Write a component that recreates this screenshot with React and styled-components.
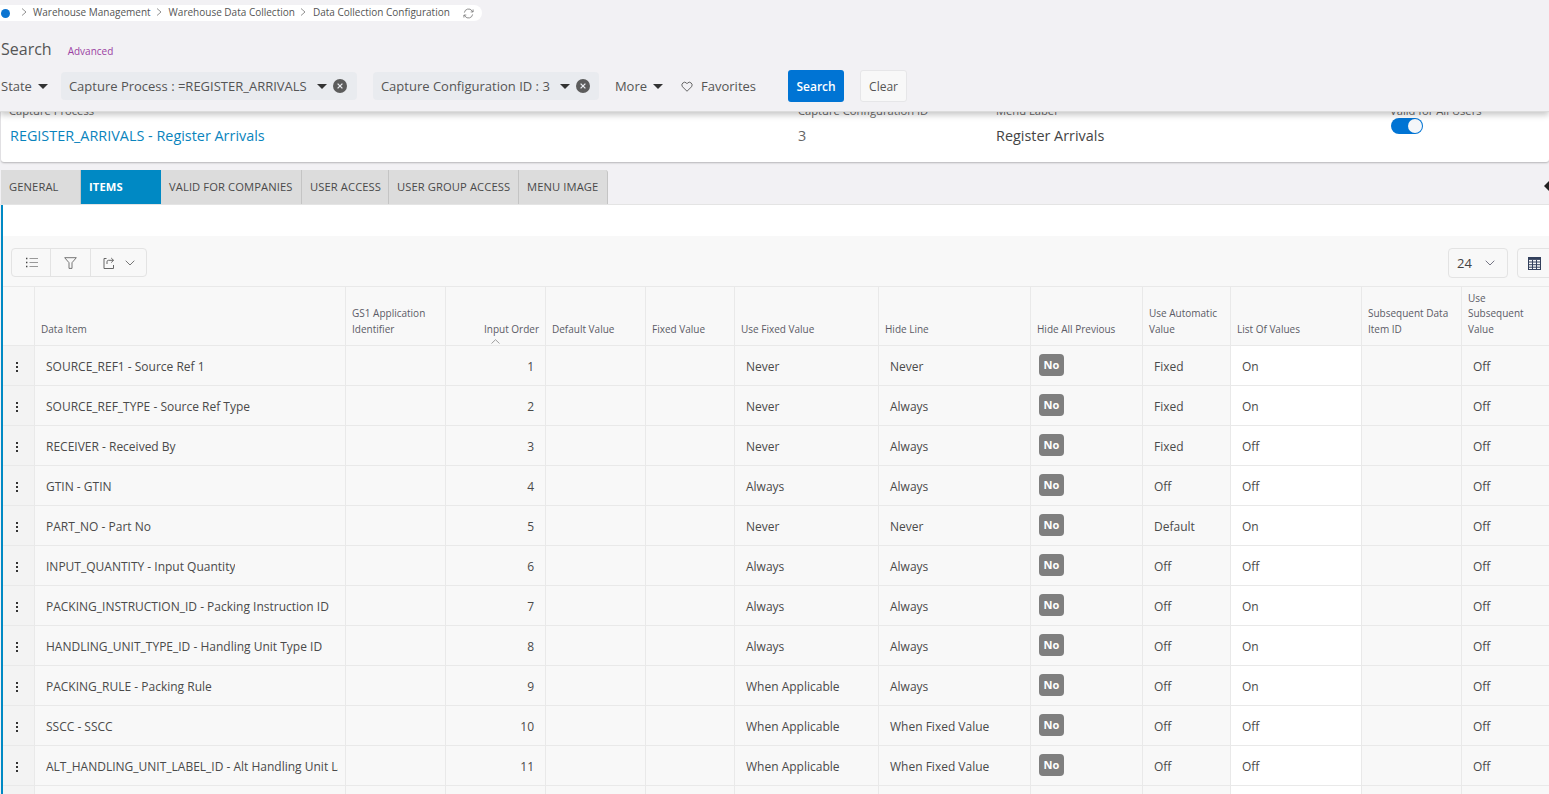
import React from "react";
import styled, { createGlobalStyle } from "styled-components";

const Global = createGlobalStyle`
  html, body { margin: 0; padding: 0; height: 794px; overflow: hidden; background: #f2f1f4; }
  * { box-sizing: border-box; }
  body { font-family: "Open Sans", "Liberation Sans", sans-serif; color: #444; }
`;

const Page = styled.div`
  width: 1549px;
  height: 794px;
  overflow: hidden;
  display: flex;
  flex-direction: column;
`;

const SearchHeader = styled.header`
  position: relative;
  z-index: 2;
  height: 112px;
  flex: none;
  background: #f2f1f4;
  border-bottom: 1px solid #dcdcdc;
  box-shadow: 0 3px 6px rgba(0, 0, 0, 0.22);
  padding-top: 5px;
`;

const Crumbs = styled.nav`
  width: 482px;
  height: 16px;
  padding-bottom: 2px;
  background: #fff;
  border-radius: 0 8px 8px 0;
  display: flex;
  align-items: center;
  font-size: 10px;
  color: #555;
  white-space: nowrap;
`;

const HomeDot = styled.span`
  width: 9px;
  height: 9px;
  border-radius: 50%;
  background: #0b74d1;
  margin: 2px 7px 0 1px;
`;

const CrumbSep = styled.svg`
  width: 6px;
  height: 8px;
  margin: 0 ${p => p.$gap}px 0 ${p => p.$left}px;
  flex: none;
`;

const Refresh = styled.svg`
  width: 11px;
  height: 11px;
  margin: 2px 0 0 13px;
`;

const TitleRow = styled.div`
  display: flex;
  align-items: baseline;
  margin-top: 17px;
  padding-left: 1px;
`;

const Title = styled.h1`
  margin: 0;
  font-size: 16px;
  line-height: 22px;
  font-weight: 400;
  color: #555;
`;

const AdvancedLink = styled.a`
  margin-left: 16px;
  font-size: 10px;
  color: #9b3fa3;
`;

const FilterRow = styled.div`
  display: flex;
  align-items: center;
  height: 32px;
  margin-top: 10px;
  padding-left: 1px;
  font-size: 13px;
  color: #555;
  white-space: nowrap;
`;

const FilterLabel = styled.span`
  display: inline-flex;
  align-items: center;
  margin-right: ${p => p.$mr || 0}px;
`;

const Caret = styled.span`
  display: inline-block;
  width: 0;
  height: 0;
  margin-left: ${p => p.$ml || 6}px;
  border-left: 5px solid transparent;
  border-right: 5px solid transparent;
  border-top: 5px solid #333;
`;

const Chip = styled.div`
  display: flex;
  align-items: center;
  height: 28px;
  width: ${p => p.$w}px;
  margin-right: ${p => p.$mr}px;
  padding-left: 8px;
  background: #e9ebef;
  border-radius: 4px;
`;

const ChipClear = styled.svg`
  width: 14px;
  height: 14px;
  margin-left: 6px;
`;

const Fav = styled.span`
  display: inline-flex;
  align-items: center;
  gap: 8px;
  margin-left: 18px;
  width: 107px;
`;

const SearchBtn = styled.button`
  width: 56px;
  height: 32px;
  border: 0;
  border-radius: 3px;
  background: #0074d4;
  color: #fff;
  font: 600 12px "Open Sans", sans-serif;
`;

const ClearBtn = styled.button`
  width: 47px;
  height: 32px;
  margin-left: 16px;
  border: 1px solid #e6e6e8;
  border-radius: 3px;
  background: #f8f8f8;
  color: #555;
  font: 400 12px "Open Sans", sans-serif;
`;

const Summary = styled.section`
  flex: none;
  position: relative;
  z-index: 1;
  height: 60px;
  margin-top: -10px;
  background: #fff;
  box-shadow: 0 1px 2px rgba(0, 0, 0, 0.25);
  border-radius: 0 0 3px 3px;
  margin-left: 1px;
  display: grid;
  grid-template-columns: 789px 198px 394px 1fr;
  padding-left: 8px;
`;

const Field = styled.div`
  display: flex;
  flex-direction: column;
`;

const FieldLabel = styled.span`
  font-size: 11.2px;
  line-height: 15px;
  margin-top: 1px;
  color: #666;
  white-space: nowrap;
`;

const FieldValue = styled.span`
  margin-top: 8px;
  margin-left: ${p => p.$ml || 0}px;
  font-size: 14.4px;
  line-height: 19px;
  color: ${p => p.$c || "#444"};
`;

const Toggle = styled.span`
  position: relative;
  display: block;
  width: 32px;
  height: 16px;
  margin-left: 1px;
  border-radius: 8px;
  background: #0074d4;
  &::after {
    content: "";
    position: absolute;
    right: 1px;
    top: 1px;
    width: 14px;
    height: 14px;
    border-radius: 50%;
    background: #f4f6f9;
  }
`;

const TabBar = styled.div`
  position: relative;
  flex: none;
  height: 35px;
  margin-top: 8px;
  padding-left: 1px;
  display: flex;
  border-bottom: 1px solid #e4e4e4;
`;

const Tab = styled.div`
  width: ${p => p.$w}px;
  height: 34px;
  display: flex;
  align-items: center;
  padding: 0 0 2px 8px;
  font-size: 11.2px;
  font-weight: ${p => (p.$active ? 700 : 400)};
  letter-spacing: 0.1px;
  color: ${p => (p.$active ? "#fff" : "#4a4a4a")};
  background: ${p => (p.$active ? "#0089c4" : "#dcdcdc")};
  border-right: ${p => (p.$active ? "0" : "1px solid #c4c4c4")};
  border-radius: ${p => (p.$last ? "0 3px 0 0" : "0")};
  white-space: nowrap;
`;

const CollapseArrow = styled.span`
  position: absolute;
  right: 0;
  top: 11px;
  width: 0;
  height: 0;
  border-top: 5px solid transparent;
  border-bottom: 5px solid transparent;
  border-right: 5px solid #222;
`;

const Content = styled.main`
  flex: 1;
  margin-left: 1px;
  border-left: 2px solid #0089c4;
  background: #fff;
  padding-top: 31px;
  min-height: 0;
`;

const Panel = styled.div`
  background: #f8f8f8;
  height: 100%;
`;

const Toolbar = styled.div`
  height: 51px;
  padding: 12px 0 0 8px;
  display: flex;
  align-items: flex-start;
  justify-content: space-between;
  border-bottom: 1px solid #e9e9e9;
`;

const ToolGroup = styled.div`
  display: flex;
  height: 29px;
  background: #f8f8f8;
  border: 1px solid #e3e3e3;
  border-radius: 4px;
`;

const ToolBtn = styled.div`
  width: ${p => p.$w}px;
  display: flex;
  align-items: center;
  justify-content: center;
  gap: 11px;
  border-left: ${p => (p.$first ? "0" : "1px solid #e3e3e3")};
`;

const ToolRight = styled.div`
  display: flex;
  gap: 9px;
`;

const PageSize = styled.div`
  width: 60px;
  height: 30px;
  border: 1px solid #e3e3e3;
  border-radius: 4px;
  display: flex;
  align-items: center;
  justify-content: space-between;
  padding: 0 12px 0 8px;
  font-size: 13px;
  color: #444;
`;

const GridBtn = styled.div`
  width: 36px;
  height: 30px;
  margin-right: -4px;
  border: 1px solid #e3e3e3;
  border-radius: 4px;
  display: flex;
  align-items: center;
  padding-left: 10px;
`;

const COLS = "32px 311px 100px 100px 100px 89px 144px 152px 112px 88px 131px 100px 88px";

const HeadRow = styled.div`
  display: grid;
  grid-template-columns: ${COLS};
  height: 59px;
  border-bottom: 1px solid #e9e9e9;
`;

const HeadCell = styled.div`
  position: relative;
  display: flex;
  align-items: flex-end;
  justify-content: ${p => (p.$right ? "flex-end" : "flex-start")};
  text-align: left;
  white-space: pre-line;
  padding: 0 ${p => (p.$right ? 6 : 5)}px 8px 6px;
  font-size: 10px;
  line-height: 15.5px;
  color: #5b5b66;
  border-right: 1px solid #e9e9e9;
`;

const SortMark = styled.svg`
  position: absolute;
  left: 45px;
  bottom: 1px;
  width: 9px;
  height: 5px;
`;

const Row = styled.div`
  display: grid;
  grid-template-columns: ${COLS};
  height: 40px;
  border-bottom: 1px solid #e9e9e9;
`;

const Cell = styled.div`
  display: flex;
  align-items: center;
  justify-content: ${p => (p.$right ? "flex-end" : "flex-start")};
  padding: ${p => (p.$right ? "1px 11px 0 0" : "1px 0 0 11px")};
  font-size: 12px;
  color: #4a4a4a;
  white-space: nowrap;
  overflow: hidden;
  border-right: 1px solid #e9e9e9;
  background: ${p => (p.$white ? "#fff" : "transparent")};
`;

const ItemText = styled.span`
  display: block;
  max-width: 292px;
  overflow: hidden;
`;

const MenuCell = styled.div`
  display: flex;
  align-items: center;
  justify-content: center;
  background: #f3f3f3;
  border-right: 1px solid #e9e9e9;
`;

const Dots = styled.svg`
  width: 4px;
  height: 12px;
  margin-top: 2px;
  margin-right: 4px;
`;

const BadgeCell = styled.div`
  padding: 8px 0 0 8px;
  border-right: 1px solid #e9e9e9;
`;

const Badge = styled.span`
  display: flex;
  align-items: center;
  justify-content: center;
  width: 25px;
  height: 22px;
  padding-bottom: 2px;
  border-radius: 4px;
  background: #7f7f7f;
  color: #fff;
  font-size: 11px;
  font-weight: 700;
`;

const rows = [
  ["SOURCE_REF1 - Source Ref 1", 1, "Never", "Never", "Fixed", "On"],
  ["SOURCE_REF_TYPE - Source Ref Type", 2, "Never", "Always", "Fixed", "On"],
  ["RECEIVER - Received By", 3, "Never", "Always", "Fixed", "Off"],
  ["GTIN - GTIN", 4, "Always", "Always", "Off", "Off"],
  ["PART_NO - Part No", 5, "Never", "Never", "Default", "On"],
  ["INPUT_QUANTITY - Input Quantity", 6, "Always", "Always", "Off", "Off"],
  ["PACKING_INSTRUCTION_ID - Packing Instruction ID", 7, "Always", "Always", "Off", "On"],
  ["HANDLING_UNIT_TYPE_ID - Handling Unit Type ID", 8, "Always", "Always", "Off", "On"],
  ["PACKING_RULE - Packing Rule", 9, "When Applicable", "Always", "Off", "On"],
  ["SSCC - SSCC", 10, "When Applicable", "When Fixed Value", "Off", "Off"],
  ["ALT_HANDLING_UNIT_LABEL_ID - Alt Handling Unit Label ID", 11, "When Applicable", "When Fixed Value", "Off", "Off"],
  ["", "", "", "", "", ""],
];

const heads = [
  "",
  "Data Item",
  "GS1 Application\nIdentifier",
  "Input Order",
  "Default Value",
  "Fixed Value",
  "Use Fixed Value",
  "Hide Line",
  "Hide All Previous",
  "Use Automatic\nValue",
  "List Of Values",
  "Subsequent Data\nItem ID",
  "Use\nSubsequent\nValue",
];

const tabs = [
  ["GENERAL", 80],
  ["ITEMS", 80],
  ["VALID FOR COMPANIES", 141],
  ["USER ACCESS", 87],
  ["USER GROUP ACCESS", 130],
  ["MENU IMAGE", 89],
];

const Sep = ({ gap, left }) => (
  <CrumbSep $gap={gap} $left={left} viewBox="0 0 6 8" fill="none" stroke="#777" strokeWidth="0.8">
    <path d="M1 .5 5 4 1 7.5" />
  </CrumbSep>
);

const ClearIcon = () => (
  <ChipClear viewBox="0 0 14 14">
    <circle cx="7" cy="7" r="7" fill="#5c5c5c" />
    <path d="M4.6 4.6l4.8 4.8M9.4 4.6l-4.8 4.8" stroke="#e9ebef" strokeWidth="1.3" />
  </ChipClear>
);

export default function App() {
  return (
    <Page>
      <Global />
      <SearchHeader>
        <Crumbs>
          <HomeDot />
          <Sep left={4} gap={6} />
          Warehouse Management
          <Sep left={5} gap={7} />
          Warehouse Data Collection
          <Sep left={5} gap={7} />
          Data Collection Configuration
          <Refresh viewBox="0 0 12 12" fill="none" stroke="#777" strokeWidth="0.9">
            <path d="M1.5 5A4.6 4.6 0 0 1 9.8 3L11 4.3M10.5 7A4.6 4.6 0 0 1 2.2 9L1 7.7" />
            <path d="M11 1.6v2.7H8.4M1 10.4V7.7h2.6" />
          </Refresh>
        </Crumbs>
        <TitleRow>
          <Title>Search</Title>
          <AdvancedLink>Advanced</AdvancedLink>
        </TitleRow>
        <FilterRow>
          <FilterLabel $mr={13}>State<Caret $ml={6} /></FilterLabel>
          <Chip $w={296} $mr={16}>
            Capture Process : =REGISTER_ARRIVALS
            <Caret $ml={10} />
            <ClearIcon />
          </Chip>
          <Chip $w={226} $mr={16}>
            Capture Configuration ID : 3
            <Caret $ml={10} />
            <ClearIcon />
          </Chip>
          <FilterLabel>More<Caret $ml={6} /></FilterLabel>
          <Fav>
            <svg width="12" height="11" viewBox="0 0 24 22" fill="none" stroke="#555" strokeWidth="1.8">
              <path d="M12 20.5 3 11.5A5.5 5.5 0 0 1 11 4l1 1.2L13 4a5.5 5.5 0 0 1 8 7.5z" />
            </svg>
            Favorites
          </Fav>
          <SearchBtn>Search</SearchBtn>
          <ClearBtn>Clear</ClearBtn>
        </FilterRow>
      </SearchHeader>

      <Summary>
        <Field>
          <FieldLabel>Capture Process</FieldLabel>
          <FieldValue $ml={1} $c="#0a84bd">REGISTER_ARRIVALS - Register Arrivals</FieldValue>
        </Field>
        <Field>
          <FieldLabel>Capture Configuration ID</FieldLabel>
          <FieldValue $c="#666">3</FieldValue>
        </Field>
        <Field>
          <FieldLabel>Menu Label</FieldLabel>
          <FieldValue>Register Arrivals</FieldValue>
        </Field>
        <Field>
          <FieldLabel>Valid for All Users</FieldLabel>
          <Toggle />
        </Field>
      </Summary>

      <TabBar>
        {tabs.map(([t, w], i) => (
          <Tab key={t} $w={w} $active={i === 1} $last={i === 5}>{t}</Tab>
        ))}
        <CollapseArrow />
      </TabBar>

      <Content>
        <Panel>
          <Toolbar>
            <ToolGroup>
              <ToolBtn $first $w={38}>
                <svg width="13" height="11" viewBox="0 0 13 11" fill="none">
                  <path d="M1 1.5h1.4M1 5.5h1.4M1 9.5h1.4" stroke="#444" strokeWidth="1.4" />
                  <path d="M4.5 1.5H13M4.5 5.5H13M4.5 9.5H13" stroke="#999" />
                </svg>
              </ToolBtn>
              <ToolBtn $w={40}>
                <svg width="13" height="12" viewBox="0 0 13 12" stroke="#666" strokeWidth="0.9" fill="none">
                  <path d="M.7.7h11.6L8 5.7V11.4H5V5.7z" />
                </svg>
              </ToolBtn>
              <ToolBtn $w={56}>
                <svg width="11" height="12" viewBox="0 0 11 12" stroke="#666" strokeWidth="1" fill="none">
                  <path d="M3.5 1.5H1v10h9.5V8" />
                  <path d="M4 7V4.7c0-.8.6-1.4 1.4-1.4H10.5M8.2 1 10.5 3.3 8.2 5.6" />
                </svg>
                <svg width="10" height="6" viewBox="0 0 10 6" stroke="#666" strokeWidth="0.9" fill="none">
                  <path d="M.7.7 5 5 9.3.7" />
                </svg>
              </ToolBtn>
            </ToolGroup>
            <ToolRight>
              <PageSize>
                24
                <svg width="10" height="6" viewBox="0 0 10 6" stroke="#667" strokeWidth="0.9" fill="none">
                  <path d="M.7.7 5 5 9.3.7" />
                </svg>
              </PageSize>
              <GridBtn>
                <svg width="13" height="13" viewBox="0 0 13 13" fill="none" stroke="#33405c" strokeWidth="1">
                  <rect x=".5" y=".5" width="12" height="12" />
                  <path d="M.5 5h12M.5 7.7h12M.5 10.2h12M4.5 3v9.5M8.5 3v9.5" />
                  <path d="M.5 1.7h12" strokeWidth="2.4" />
                </svg>
              </GridBtn>
            </ToolRight>
          </Toolbar>
          <HeadRow>
            {heads.map((h, i) => (
              <HeadCell key={i} $right={i === 3}>
                <span>{h}</span>
                {i === 3 && (
                  <SortMark viewBox="0 0 9 5" fill="none" stroke="#888" strokeWidth="0.8">
                    <path d="M.5 4.5 4.5.7l4 3.8" />
                  </SortMark>
                )}
              </HeadCell>
            ))}
          </HeadRow>
          {rows.map((r, i) => (
            <Row key={i}>
              <MenuCell>
                {r[0] && (
                  <Dots viewBox="0 0 4 12" fill="#333">
                    <rect x="1" y="1" width="2" height="2" />
                    <rect x="1" y="5" width="2" height="2" />
                    <rect x="1" y="9" width="2" height="2" />
                  </Dots>
                )}
              </MenuCell>
              <Cell><ItemText>{r[0]}</ItemText></Cell>
              <Cell />
              <Cell $right>{r[1]}</Cell>
              <Cell />
              <Cell />
              <Cell>{r[2]}</Cell>
              <Cell>{r[3]}</Cell>
              <BadgeCell>{r[0] && <Badge>No</Badge>}</BadgeCell>
              <Cell>{r[4]}</Cell>
              <Cell $white>{r[5]}</Cell>
              <Cell />
              <Cell>{r[0] && "Off"}</Cell>
            </Row>
          ))}
        </Panel>
      </Content>
    </Page>
  );
}
